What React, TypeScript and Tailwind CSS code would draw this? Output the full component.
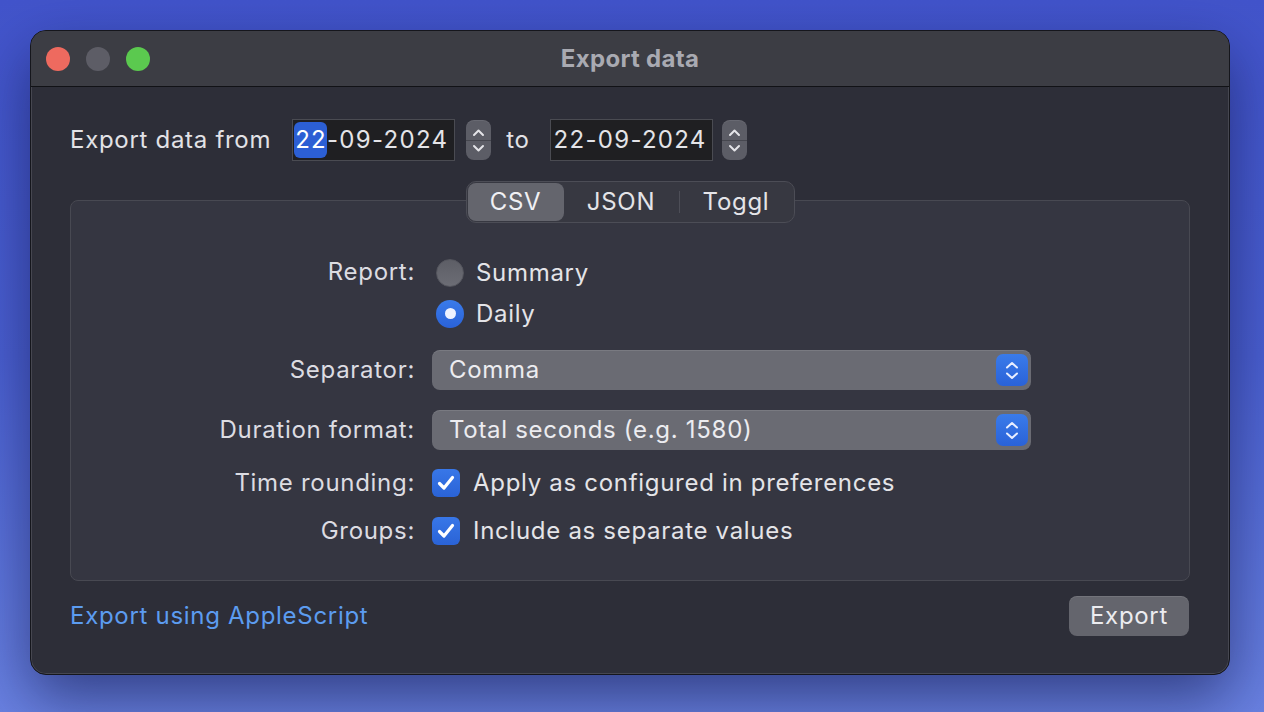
import { useState } from 'react';

const font = { fontFamily: 'Inter, "Noto Sans", sans-serif' };

const txt = 'text-[24px] tracking-[0.7px]';

function Stepper() {
  return (
    <div className="flex h-[40px] w-[25px] flex-col items-center justify-center rounded-[8px] bg-[#5c5d66] shadow-[inset_0_1px_0_rgba(255,255,255,0.08)]">
      <svg width="13" height="9" viewBox="0 0 13 9" className="mb-[3px]">
        <path d="M2 7 L6.5 2.5 L11 7" fill="none" stroke="#e4e4e8" strokeWidth="2" strokeLinecap="round" strokeLinejoin="round" />
      </svg>
      <div className="h-px w-full bg-[#45464e]" />
      <svg width="13" height="9" viewBox="0 0 13 9" className="mt-[3px]">
        <path d="M2 2 L6.5 6.5 L11 2" fill="none" stroke="#e4e4e8" strokeWidth="2" strokeLinecap="round" strokeLinejoin="round" />
      </svg>
    </div>
  );
}

function DateField({ highlight }: { highlight?: boolean }) {
  return (
    <div className="flex h-[42px] w-[163px] items-center border border-[#4a4b52] bg-[#1f1f22] pl-[1px] text-[24px] tracking-[1.3px] text-[#e4e4e8]">
      {highlight ? (
        <span className="rounded-[6px] bg-[#2c5fd4] pl-[1px] text-white">22</span>
      ) : (
        <span className="pl-[2px]">22</span>
      )}
      <span>-09-2024</span>
    </div>
  );
}

function SelectBox({ value }: { value: string }) {
  return (
    <div className="flex h-[40px] w-[599px] items-center justify-between rounded-[8px] bg-[#6a6b73] pl-[17px] pr-[3px] shadow-[inset_0_1px_0_rgba(255,255,255,0.1)]">
      <span className={`${txt} text-[#ececf0]`}>{value}</span>
      <div className="flex h-[32px] w-[32px] flex-col items-center justify-center gap-[3px] rounded-[7px] bg-gradient-to-b from-[#3a7bea] to-[#2a62d8]">
        <svg width="14" height="8" viewBox="0 0 14 8">
          <path d="M2 6.5 L7 2 L12 6.5" fill="none" stroke="#e8eeff" strokeWidth="2" strokeLinecap="round" strokeLinejoin="round" />
        </svg>
        <svg width="14" height="8" viewBox="0 0 14 8">
          <path d="M2 1.5 L7 6 L12 1.5" fill="none" stroke="#e8eeff" strokeWidth="2" strokeLinecap="round" strokeLinejoin="round" />
        </svg>
      </div>
    </div>
  );
}

function Checkbox() {
  return (
    <div className="flex h-[28px] w-[28px] items-center justify-center rounded-[6px] bg-gradient-to-b from-[#3877e8] to-[#2a63d6]">
      <svg width="20" height="18" viewBox="0 0 20 18">
        <path d="M3.5 9.5 L8 14 L16.5 3.5" fill="none" stroke="#ffffff" strokeWidth="3.2" strokeLinecap="round" strokeLinejoin="round" />
      </svg>
    </div>
  );
}

function Radio({ checked }: { checked?: boolean }) {
  return checked ? (
    <div className="flex h-[28px] w-[28px] items-center justify-center rounded-full bg-gradient-to-b from-[#3a7bea] to-[#2a62d8]">
      <div className="h-[11px] w-[11px] rounded-full bg-[#eef2ff]" />
    </div>
  ) : (
    <div className="h-[28px] w-[28px] rounded-full border border-[#55565e] bg-gradient-to-b from-[#5d5e66] to-[#6c6d75]" />
  );
}

function Label({ children }: { children: string }) {
  return (
    <div className={`flex h-[40px] w-[344px] shrink-0 items-center justify-end ${txt} text-[#dcdce2]`}>{children}</div>
  );
}

export default function App() {
  const [tab, setTab] = useState<'CSV' | 'JSON' | 'Toggl'>('CSV');

  const tabs: { name: 'CSV' | 'JSON' | 'Toggl'; w: string }[] = [
    { name: 'CSV', w: 'w-[96px]' },
    { name: 'JSON', w: 'w-[115px]' },
    { name: 'Toggl', w: 'w-[113px]' },
  ];

  return (
    <div
      className="flex h-[712px] w-[1264px] items-start overflow-hidden bg-gradient-to-b from-[#4254cb] via-[#4b60d2] to-[#6a82e2] pl-[30px] pt-[30px]"
      style={font}
    >
      <div className="flex h-[645px] w-[1200px] flex-col overflow-hidden rounded-[16px] border border-[#15161c] bg-[#2d2e38] shadow-[0_24px_60px_rgba(10,15,60,0.55),inset_0_0_0_1px_rgba(255,255,255,0.12)]">
        {/* title bar */}
        <div className="relative flex h-[56px] shrink-0 items-center border-b border-[#111216] bg-[#3c3d44] px-[15px]">
          <div className="flex gap-[16px]">
            <div className="h-[24px] w-[24px] rounded-full bg-[#ee6a5f]" />
            <div className="h-[24px] w-[24px] rounded-full bg-[#5d5d66]" />
            <div className="h-[24px] w-[24px] rounded-full bg-[#5bc94f]" />
          </div>
          <div className="absolute inset-x-0 top-0 flex h-full items-center justify-center text-[24px] font-bold tracking-[0.3px] text-[#a9aab2]">
            Export data
          </div>
        </div>

        {/* body */}
        <div className="flex flex-1 flex-col px-[39px] pt-[32px]">
          <div className="flex h-[42px] items-center">
            <span className={`mr-[21px] ${txt} text-[#e2e2e6]`}>Export data from</span>
            <DateField highlight />
            <div className="ml-[11px]">
              <Stepper />
            </div>
            <span className={`ml-[15px] mr-[20px] ${txt} text-[#e2e2e6]`}>to</span>
            <DateField />
            <div className="ml-[9px]">
              <Stepper />
            </div>
          </div>

          <div className="mt-[39px] flex h-[381px] flex-col rounded-[8px] border border-[#484952] bg-[#353641]">
            <div className="-mt-[20px] flex justify-center">
              <div className="flex h-[42px] items-center rounded-[10px] border border-[#4c4d56] bg-[#373841] px-[1px]">
                {tabs.map((t, i) => (
                  <div key={t.name} className="flex h-full items-center">
                    {i === 2 && tab === 'CSV' && <div className="h-[22px] w-px bg-[#4d4e57]" />}
                    <button
                      onClick={() => setTab(t.name)}
                      className={`flex h-[38px] ${t.w} items-center justify-center rounded-[8px] ${txt} ${
                        tab === t.name ? 'bg-[#64656d] text-[#f0f0f4]' : 'text-[#e4e4e8]'
                      }`}
                    >
                      {t.name}
                    </button>
                  </div>
                ))}
              </div>
            </div>

            <div className="mt-[29px] flex">
              <Label>Report:</Label>
              <div className="ml-[21px] flex flex-col">
                <div className="flex h-[41px] items-center gap-[12px]">
                  <Radio />
                  <span className={`${txt} text-[#e4e4e8]`}>Summary</span>
                </div>
                <div className="flex h-[41px] items-center gap-[12px]">
                  <Radio checked />
                  <span className={`${txt} text-[#e4e4e8]`}>Daily</span>
                </div>
              </div>
            </div>

            <div className="mt-[16px] flex items-center">
              <Label>Separator:</Label>
              <div className="ml-[17px]">
                <SelectBox value="Comma" />
              </div>
            </div>

            <div className="mt-[20px] flex items-center">
              <Label>Duration format:</Label>
              <div className="ml-[17px]">
                <SelectBox value="Total seconds (e.g. 1580)" />
              </div>
            </div>

            <div className="mt-[13px] flex h-[40px] items-center">
              <Label>Time rounding:</Label>
              <div className="ml-[17px] flex items-center gap-[13px]">
                <Checkbox />
                <span className={`${txt} text-[#e4e4e8]`}>Apply as configured in preferences</span>
              </div>
            </div>

            <div className="mt-[8px] flex h-[40px] items-center">
              <Label>Groups:</Label>
              <div className="ml-[17px] flex items-center gap-[13px]">
                <Checkbox />
                <span className={`${txt} text-[#e4e4e8]`}>Include as separate values</span>
              </div>
            </div>
          </div>

          <div className="mt-[15px] flex items-center justify-between pr-[1px]">
            <a className={`cursor-pointer ${txt} text-[#5c9cf0]`}>Export using AppleScript</a>
            <button className={`flex h-[40px] w-[120px] items-center justify-center rounded-[8px] bg-[#64656d] ${txt} text-[#ececf0] shadow-[inset_0_1px_0_rgba(255,255,255,0.1)]`}>
              Export
            </button>
          </div>
        </div>
      </div>
    </div>
  );
}
